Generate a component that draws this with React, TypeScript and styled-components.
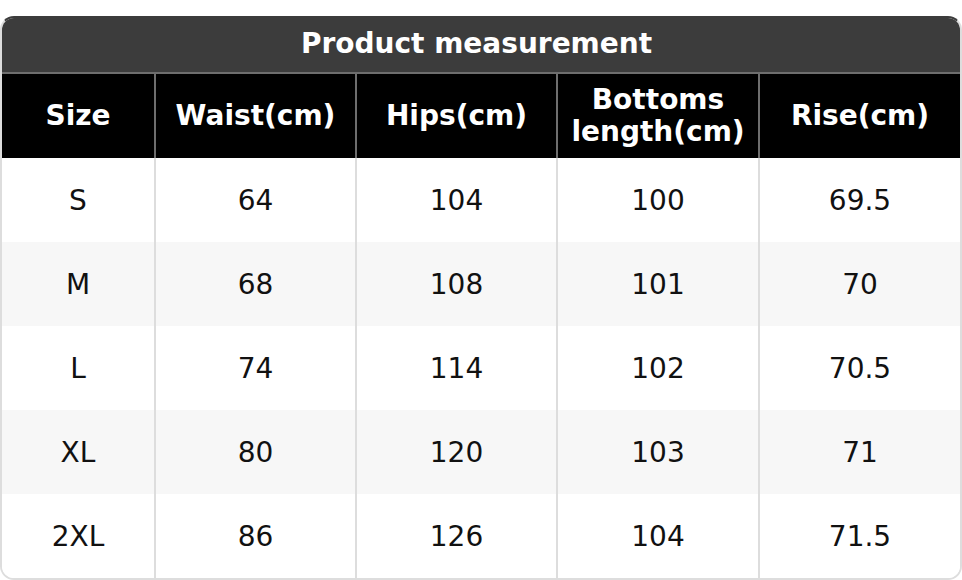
import React from "react";
import styled, { createGlobalStyle } from "styled-components";

const Global = createGlobalStyle`
  html, body {
    margin: 0;
    padding: 0;
    background: #ffffff;
    overflow: hidden;
  }
  body {
    font-family: "DejaVu Sans", "Liberation Sans", sans-serif;
  }
`;

const Page = styled.div`
  padding-top: 16px;
  width: 962px;
`;

const Card = styled.div`
  box-sizing: border-box;
  width: 962px;
  border: 2px solid #dddddd;
  border-top-color: #3c3c3c;
  border-radius: 14px;
  overflow: hidden;
  background: #ffffff;
`;

const Title = styled.div`
  box-sizing: border-box;
  height: 56px;
  padding: 0 9px 3px 0;
  background: #3c3c3c;
  color: #ffffff;
  font-weight: bold;
  font-size: 28px;
  display: flex;
  align-items: center;
  justify-content: center;
  border-bottom: 2px solid #6e6e6e;
  margin: 0 -2px;
`;

const COLS = "152px 201px 201px 202px 1fr";

const HeaderRow = styled.div`
  display: grid;
  grid-template-columns: ${COLS};
  height: 84px;
  background: #000000;
`;

const HeadCell = styled.div<{ $first?: boolean }>`
  box-sizing: border-box;
  display: flex;
  align-items: center;
  justify-content: center;
  text-align: center;
  color: #ffffff;
  font-weight: bold;
  font-size: 28px;
  line-height: 32px;
  border-left: ${(p) => (p.$first ? "none" : "2px solid #6e6e6e")};
`;

const Row = styled.div<{ $alt: boolean }>`
  display: grid;
  grid-template-columns: ${COLS};
  height: 84px;
  background: ${(p) => (p.$alt ? "#f7f7f7" : "#ffffff")};
`;

const Cell = styled.div<{ $first?: boolean }>`
  box-sizing: border-box;
  display: flex;
  align-items: center;
  justify-content: center;
  color: #111111;
  font-size: 28px;
  border-left: ${(p) => (p.$first ? "none" : "2px solid #dddddd")};
`;

const headers = ["Size", "Waist(cm)", "Hips(cm)", "Bottoms\nlength(cm)", "Rise(cm)"];

const rows = [
  ["S", "64", "104", "100", "69.5"],
  ["M", "68", "108", "101", "70"],
  ["L", "74", "114", "102", "70.5"],
  ["XL", "80", "120", "103", "71"],
  ["2XL", "86", "126", "104", "71.5"],
];

export default function App() {
  return (
    <>
      <Global />
      <Page>
        <Card>
          <Title>Product measurement</Title>
          <HeaderRow>
            {headers.map((h, i) => (
              <HeadCell key={h} $first={i === 0}>
                <span>
                  {h.split("\n").map((line, j) => (
                    <React.Fragment key={j}>
                      {j > 0 && <br />}
                      {line}
                    </React.Fragment>
                  ))}
                </span>
              </HeadCell>
            ))}
          </HeaderRow>
          {rows.map((r, i) => (
            <Row key={r[0]} $alt={i % 2 === 1}>
              {r.map((v, j) => (
                <Cell key={j} $first={j === 0}>
                  {v}
                </Cell>
              ))}
            </Row>
          ))}
        </Card>
      </Page>
    </>
  );
}
